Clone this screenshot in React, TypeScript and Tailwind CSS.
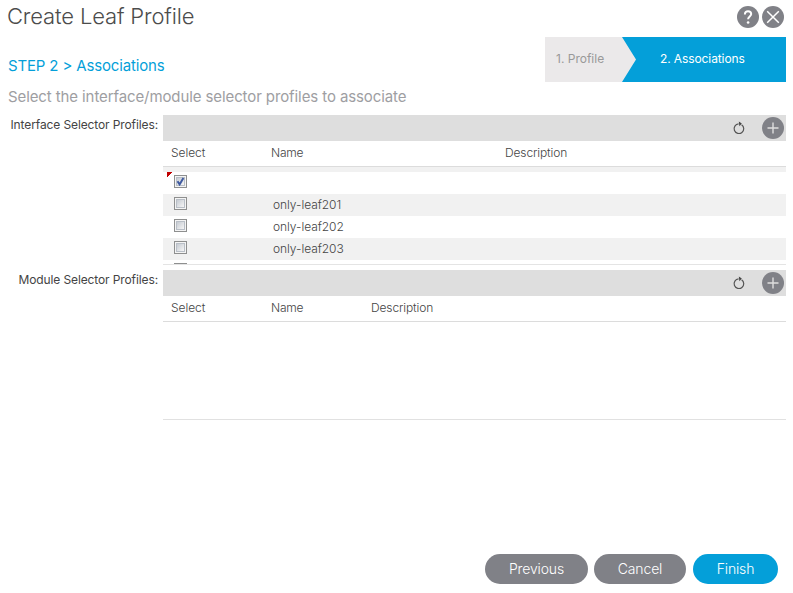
import React from "react";

function Checkbox({ checked = false }: { checked?: boolean }) {
  return (
    <span className="flex h-[13px] w-[13px] shrink-0 items-center justify-center border border-[#8e8f8f] bg-[#f4f4f4]">
      <span className="relative block h-[9px] w-[9px] border border-[#b9bfc7] bg-linear-to-br from-[#c6cbd2] to-[#f6f6f6]">
        {checked && (
          <svg viewBox="0 0 9 9" className="absolute -left-px -top-px h-[9px] w-[9px]">
            <path d="M1.5 4.3 3.6 7.4 7.4 0.9" fill="none" stroke="#3f5aa0" strokeWidth="2" />
          </svg>
        )}
      </span>
    </span>
  );
}

function Refresh() {
  return (
    <svg viewBox="0 0 14 14" className="h-[14px] w-[14px]">
      <path d="M9.6 3.7A4.8 4.8 0 1 1 6.6 2.9" fill="none" stroke="#555" strokeWidth="1.2" />
      <path d="M6.8 0.6 9.8 2.6 7.4 5.2Z" fill="#444" />
    </svg>
  );
}

function Toolbar() {
  return (
    <div className="flex h-[26px] items-center justify-end bg-[#dedede] pr-[2px]">
      <Refresh />
      <svg viewBox="0 0 22 22" className="ml-4 h-[22px] w-[22px]">
        <circle cx="11" cy="11" r="11" fill="#808187" />
        <path d="M11 5.5v11M5.5 11h11" stroke="#dedede" strokeWidth="1.4" />
      </svg>
    </div>
  );
}

function Header({ nameWidth }: { nameWidth: string }) {
  return (
    <div className="flex h-[26px] items-start border-b border-[#dcdcdc] pl-2 pt-[5px] text-[12px] leading-[14px] font-light text-[#444]">
      <span className="w-[100px] tracking-[-0.05px]">Select</span>
      <span className={`${nameWidth} tracking-[-0.2px]`}>Name</span>
      <span className="tracking-[-0.12px]">Description</span>
    </div>
  );
}

function Row({ name, shaded }: { name: string; shaded?: boolean }) {
  return (
    <div className={`flex h-[22px] shrink-0 items-start pl-[11px] pt-[3px] ${shaded ? "bg-[#f1f1f1]" : "bg-white"}`}>
      <Checkbox />
      <span className="ml-[86px] text-[12px] leading-[16px] font-light tracking-[-0.05px] text-[#444]">{name}</span>
    </div>
  );
}

export default function App() {
  return (
    <div className="flex h-[593px] w-[793px] flex-col overflow-hidden bg-white font-['Inter',sans-serif]">
      <div className="flex h-[115px] justify-between pl-2 pr-[7px]">
        <div className="whitespace-nowrap">
          <h1 className="-ml-px mt-[3px] text-[22px] leading-[27px] font-light tracking-[-0.15px] text-[#4c4c4c]">Create Leaf Profile</h1>
          <h2 className="mt-[26px] text-[15px] leading-5 font-normal tracking-[-0.15px] text-[#049fd9]">STEP 2 &gt; Associations</h2>
          <p className="mt-[11px] text-[15px] leading-5 font-normal tracking-[-0.1px] text-[#9e9ea2]">
            Select the interface/module selector profiles to associate
          </p>
        </div>
        <div className="flex w-[241px] flex-col">
          <div className="mt-[6px] flex justify-end gap-[3px] pr-[2px]">
            <svg viewBox="0 0 22 22" className="h-[22px] w-[22px]">
              <circle cx="11" cy="11" r="11" fill="#808187" />
              <path d="M7.9 8.4C7.9 6.4 9.2 5.2 11 5.2s3.2 1.1 3.2 2.9c0 2.3-3.1 2.5-3.1 5.1" fill="none" stroke="#fff" strokeWidth="2" />
              <circle cx="11.1" cy="16.5" r="1.3" fill="#fff" />
            </svg>
            <svg viewBox="0 0 22 22" className="h-[22px] w-[22px]">
              <circle cx="11" cy="11" r="11" fill="#808187" />
              <path d="M5.2 5.2 16.8 16.8M16.8 5.2 5.2 16.8" stroke="#fff" strokeWidth="1.5" />
            </svg>
          </div>
          <div className="mt-[9px] flex h-[45px] bg-[#ebe9ea] text-[12px] leading-[43px]">
            <span className="w-[77px] pl-[11px] text-[#999]">1. Profile</span>
            <span className="flex-1 bg-[#049fd9] pl-[38px] tracking-[-0.1px] text-white [clip-path:polygon(0_0,100%_0,100%_100%,0_100%,14px_50%)]">
              2. Associations
            </span>
          </div>
        </div>
      </div>

      <div className="flex h-[155px] pr-[7px]">
        <div className="w-[163px] pr-[5px] pt-[2px] text-right text-[12px] leading-4 tracking-[-0.11px] text-[#444]">Interface Selector Profiles:</div>
        <div className="flex-1">
          <Toolbar />
          <Header nameWidth="w-[234px]" />
          <div className="flex h-[98px] flex-col overflow-hidden border-b border-[#e4e4e4]">
            <div className="h-[5px] shrink-0 bg-[#f1f1f1]" />
            <div className="flex h-[22px] shrink-0 items-start pl-1">
              <svg viewBox="0 0 5 5" className="h-[5px] w-[5px]">
                <path d="M0 0h5v1h-1v1h-1v1h-1v1h-1v1h-1Z" fill="#c00000" />
              </svg>
              <div className="ml-[2px] pt-[3px]">
                <Checkbox checked />
              </div>
            </div>
            <Row name="only-leaf201" shaded />
            <Row name="only-leaf202" />
            <Row name="only-leaf203" shaded />
            <Row name="" />
          </div>
        </div>
      </div>

      <div className="flex h-[150px] pr-[7px]">
        <div className="w-[163px] pr-[5px] pt-[2px] text-right text-[12px] leading-4 tracking-[-0.11px] text-[#444]">Module Selector Profiles:</div>
        <div className="flex-1 border-b border-[#e1e1e1]">
          <Toolbar />
          <Header nameWidth="w-[100px]" />
        </div>
      </div>

      <div className="mt-[134px] flex h-[30px] pl-[485px] text-[14px] leading-[30px] font-light tracking-[-0.15px] text-white">
        <button className="w-[103px] rounded-full bg-[#808187]">Previous</button>
        <button className="ml-[6px] w-[92px] rounded-full bg-[#808187]">Cancel</button>
        <button className="ml-[7px] w-[85px] rounded-full bg-[#049fd9]">Finish</button>
      </div>
    </div>
  );
}
